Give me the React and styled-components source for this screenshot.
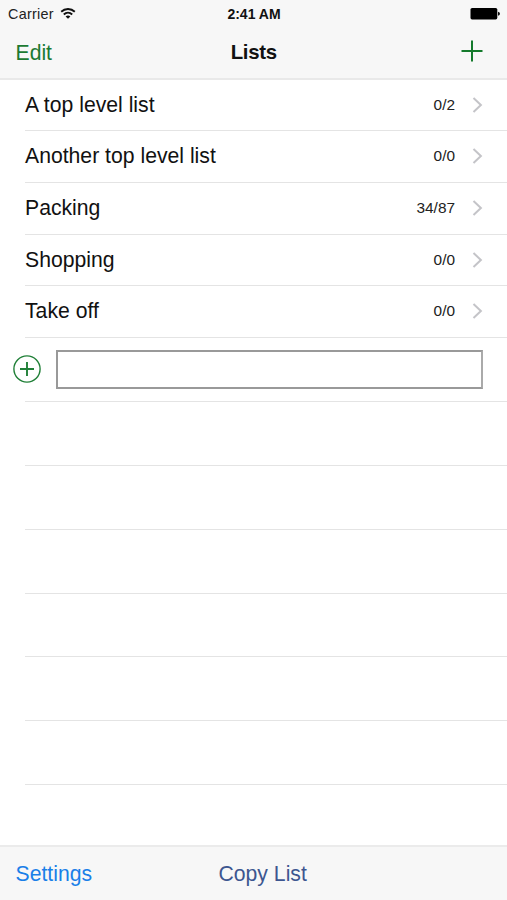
import React, { useState } from 'react'
import styled, { createGlobalStyle } from 'styled-components';

const GlobalStyle = createGlobalStyle`
body{
    margin: 0;
    background: #fff;
}
* {
    box-sizing: border-box;
}
`;

const Screen = styled.div`
width: 507px;
height: 900px;
display: flex;
flex-direction: column;
overflow: hidden;
background: #fff;
color: #111;
font-family: "Liberation Sans", Arial, sans-serif;
`;

const Header = styled.header`
height: 80px;
flex: none;
background: #f7f7f7;
border-bottom: 2px solid #e9e9e9;
`;

const StatusBar = styled.div`
height: 27px;
display: grid;
grid-template-columns: 1fr auto 1fr;
align-items: center;
padding: 0 7px 0 8px;
font-size: 14.4px;
line-height: 28px;
`;

const Carrier = styled.div`
display: flex;
align-items: center;
gap: 6px;
letter-spacing: 0.25px;
color: #222;

svg{
    margin-bottom: 2px;
}
`;

const Time = styled.div`
font-weight: 700;
font-size: 14px;
`;

const BatteryWrapper = styled.div`
display: flex;
justify-content: flex-end;
`;

const NavBar = styled.div`
height: 51px;
display: grid;
grid-template-columns: 1fr auto 1fr;
align-items: center;
padding: 0 24px 0 15.5px;

svg{
    display: block;
}
`;

const NavTitle = styled.h1`
margin: 0 0 0 9px;
font-size: 20.4px;
font-weight: 700;
letter-spacing: -0.3px;
`;

const TextButton = styled.button`
padding: 0;
border: none;
background: none;
font-family: inherit;
font-size: 21.2px;
line-height: 26px;
text-align: left;
color: ${({ $color }) => $color};
cursor: pointer;
`;

const IconButton = styled.button`
padding: 0 0 3px;
border: none;
background: none;
justify-self: end;
cursor: pointer;
`;

const List = styled.ul`
flex: 1;
margin: 0;
padding: 0 0 0 25px;
list-style: none;
`;

const Row = styled.li`
height: ${({ $height }) => $height}px;
display: flex;
align-items: center;
padding-right: 24px;
padding-bottom: 1px;
border-bottom: 1px solid #e4e4e4;
`;

const RowTitle = styled.span`
flex: 1;
font-size: 21.2px;
line-height: 26px;
`;

const RowCount = styled.span`
margin-right: 17px;
font-size: 15.4px;
color: #222;
`;

const AddRow = styled(Row)`
margin-left: -12px;
border-bottom: none;
background: linear-gradient(#e4e4e4, #e4e4e4) 12px 100% / 100% 1px no-repeat;

svg{
    flex: none;
    margin: 0 15px 1px 0;
}
`;

const NameInput = styled.input`
flex: 1;
min-width: 0;
height: 39px;
padding: 0 8px;
border: 2px solid #999;
border-right-color: #aaa;
border-radius: 0;
background: #fff;
font-family: inherit;
font-size: 21px;
outline: none;
`;

const Toolbar = styled.footer`
height: 55px;
flex: none;
display: grid;
grid-template-columns: 203px 1fr;
align-items: center;
padding: 0 15.5px;
background: #f7f7f7;
border-top: 2px solid #ebebeb;
`;

const WifiIcon = () => (
    <svg width="16" height="13" viewBox="0 0 16 13" fill="none" stroke="#111" strokeWidth="1.9">
        <path d="M1.2 4.8C5 1.1 11 1.1 14.8 4.8" />
        <path d="M3.8 7.5C6.2 5.2 9.8 5.2 12.2 7.5" />
        <path d="M8 11.8L5.6 9.4C7 8.1 9 8.1 10.4 9.4Z" fill="#111" stroke="none" />
    </svg>
);

const BatteryIcon = () => (
    <svg width="30" height="12" viewBox="0 0 30 12">
        <rect x="0.5" y="0" width="26.8" height="11.4" rx="1.6" fill="#000" />
        <path d="M28 3.8Q30 4.2 30 5.8T28 7.8Z" fill="#111" />
    </svg>
);

const PlusIcon = () => (
    <svg width="22" height="22" viewBox="0 0 22 22" stroke="#147a2c" strokeWidth="2">
        <path d="M11 0.5V21.5M0.5 11H21.5" />
    </svg>
);

const ChevronIcon = () => (
    <svg width="11" height="16" viewBox="0 0 11 16" fill="none" stroke="#c4c4c8" strokeWidth="2">
        <path d="M1.5 1L8.9 8L1.5 15" />
    </svg>
);

const CircledPlusIcon = () => (
    <svg width="28" height="28" viewBox="0 0 28 28" fill="none" stroke="#218038">
        <circle cx="14" cy="14" r="13.1" strokeWidth="1.4" />
        <path d="M14 7V21M7 14H21" strokeWidth="1.9" />
    </svg>
);

const lists = [
    { title: "A top level list", count: "0/2", height: 51 },
    { title: "Another top level list", count: "0/0", height: 52 },
    { title: "Packing", count: "34/87", height: 52 },
    { title: "Shopping", count: "0/0", height: 51 },
    { title: "Take off", count: "0/0", height: 52 },
];

// empty rows that fill the rest of the table
const emptyRows = [64, 64, 64, 63, 64, 64];

const App = () => {
    const [name, setName] = useState("");

    return (
        <>
            <GlobalStyle />
            <Screen>
                <Header>
                    <StatusBar>
                        <Carrier>
                            Carrier
                            <WifiIcon />
                        </Carrier>
                        <Time>2:41 AM</Time>
                        <BatteryWrapper>
                            <BatteryIcon />
                        </BatteryWrapper>
                    </StatusBar>
                    <NavBar>
                        <TextButton $color="#1c7a33">Edit</TextButton>
                        <NavTitle>Lists</NavTitle>
                        <IconButton aria-label="Add">
                            <PlusIcon />
                        </IconButton>
                    </NavBar>
                </Header>
                <List>
                    {lists.map((item) => (
                        <Row key={item.title} $height={item.height}>
                            <RowTitle>{item.title}</RowTitle>
                            <RowCount>{item.count}</RowCount>
                            <ChevronIcon />
                        </Row>
                    ))}
                    <AddRow $height={64}>
                        <CircledPlusIcon />
                        <NameInput value={name} onChange={(e) => setName(e.target.value)} />
                    </AddRow>
                    {emptyRows.map((height, index) => (
                        <Row key={index} $height={height} />
                    ))}
                </List>
                <Toolbar>
                    <TextButton $color="#1a7fe8">Settings</TextButton>
                    <TextButton $color="#3d5690">Copy List</TextButton>
                </Toolbar>
            </Screen>
        </>
    )
}

export default App
